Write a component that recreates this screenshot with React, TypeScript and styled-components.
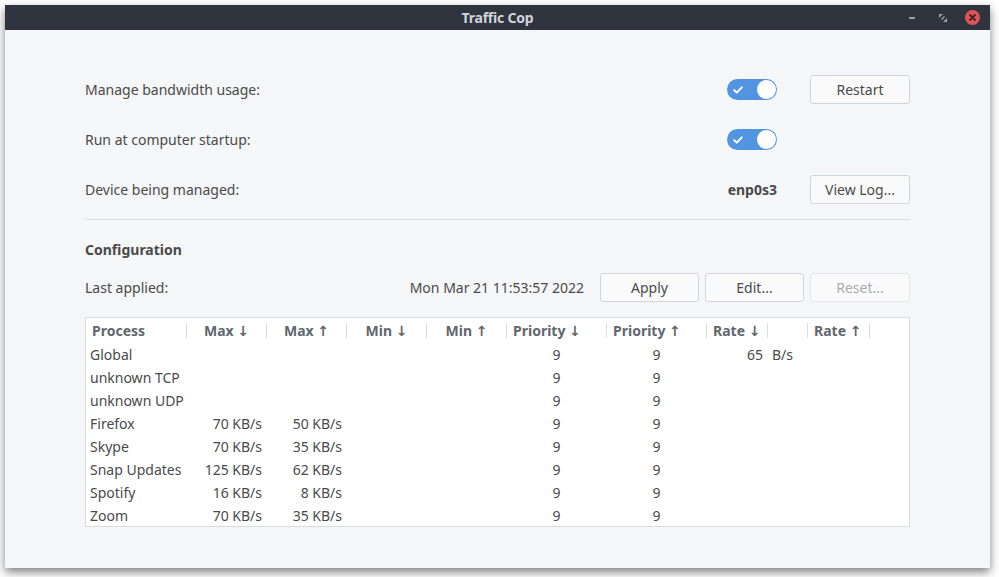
import React from "react";
import styled, { createGlobalStyle } from "styled-components";

const Global = createGlobalStyle`
  html, body { margin: 0; padding: 0; background: #ffffff; }
  body { font-family: "Noto Sans", "DejaVu Sans", sans-serif; }
`;

const Page = styled.div`
  padding: 5px 0 0 5px;
  height: 577px;
  box-sizing: border-box;
  overflow: hidden;
`;

const Window = styled.div`
  width: 985px;
  height: 563px;
  background: #f5f6f7;
  box-shadow: 0 4px 9px rgba(0, 0, 0, 0.5);
  display: flex;
  flex-direction: column;
  color: #4a4a4a;
  font-size: 14px;
`;

const TitleBar = styled.div`
  height: 25px;
  background: #30343e;
  display: grid;
  grid-template-columns: 1fr auto 1fr;
  align-items: center;
`;

const Title = styled.div`
  grid-column: 2;
  color: #cfd4db;
  font-weight: 700;
  font-size: 14px;
  letter-spacing: -0.2px;
`;

const Controls = styled.div`
  grid-column: 3;
  justify-self: end;
  display: flex;
  align-items: center;
  gap: 15px;
  padding-right: 10px;
`;

const CtlSlot = styled.div`
  width: 15px;
  height: 15px;
  display: flex;
  align-items: center;
  justify-content: center;
`;

const Content = styled.div`
  padding: 45px 80px 0 80px;
  display: flex;
  flex-direction: column;
`;

const SettingRow = styled.div`
  display: grid;
  grid-template-columns: 1fr auto 100px;
  column-gap: 33px;
  align-items: center;
  height: 29px;
  margin-bottom: 21px;
`;

const Label = styled.div`
  color: #4a4a4a;
`;

const Button = styled.button<{ $disabled?: boolean }>`
  font-family: inherit;
  font-size: 14px;
  height: 29px;
  width: 100px;
  padding: 0;
  background: #fafafb;
  border: 1px solid ${(p) => (p.$disabled ? "#e2e5ea" : "#cfd6e0")};
  border-radius: 3px;
  color: ${(p) => (p.$disabled ? "#a9abaf" : "#4a4a4a")};
`;

const Toggle = styled.div`
  width: 50px;
  height: 21px;
  border-radius: 11px;
  background: #5294e2;
  display: flex;
  align-items: center;
  justify-content: space-between;
  padding: 0 1px 0 6px;
  box-sizing: border-box;
`;

const Knob = styled.div`
  width: 19px;
  height: 19px;
  border-radius: 50%;
  background: #ffffff;
`;

const Device = styled.div`
  font-weight: 700;
  color: #4a4a4a;
`;

const Separator = styled.div`
  height: 1px;
  background: #d9dbdf;
  margin: -6px 0 20px 0;
`;

const SectionTitle = styled.div`
  font-weight: 700;
  height: 20px;
  line-height: 20px;
  margin-bottom: 13px;
`;

const ApplyRow = styled.div`
  display: flex;
  align-items: center;
  height: 29px;
  margin-bottom: 15px;
`;

const DateText = styled.div`
  margin-left: auto;
  margin-right: 16px;
`;

const ButtonGroup = styled.div`
  display: flex;
  gap: 6px;
  & > button { width: 99px; }
  & > button:last-child { width: 100px; }
`;

const Table = styled.div`
  border: 1px solid #d9dbdf;
  background: #ffffff;
  height: 210px;
  box-sizing: border-box;
`;

const cols = "101px 80px 80px 80px 80px 100px 100px 61px 40px 62px 1fr";

const HeaderRow = styled.div`
  display: grid;
  grid-template-columns: ${cols};
  align-items: center;
  height: 25px;
`;

const HeaderCell = styled.div<{ $align?: string; $last?: boolean }>`
  height: 15px;
  line-height: 15px;
  font-weight: 700;
  color: #62666d;
  text-align: ${(p) => p.$align || "left"};
  padding: 0 6px;
  border-right: ${(p) => (p.$last ? "none" : "1px solid #dcdee2")};
  white-space: nowrap;
  overflow: visible;
`;

const DataRow = styled.div`
  display: grid;
  grid-template-columns: ${cols};
  align-items: center;
  height: 23px;
`;

const Cell = styled.div<{ $align?: string }>`
  text-align: ${(p) => p.$align || "left"};
  padding: 0 5px 0 4px;
  white-space: nowrap;
  color: #4a4a4a;
`;

const Check = () => (
  <svg width="10" height="8" viewBox="0 0 10 8">
    <path d="M1.2 4.2 L3.8 6.6 L8.8 1.4" fill="none" stroke="#ffffff" strokeWidth="2" strokeLinecap="round" strokeLinejoin="round" />
  </svg>
);

const Switch = () => (
  <Toggle>
    <Check />
    <Knob />
  </Toggle>
);

type Row = {
  name: string;
  maxDown?: string;
  maxUp?: string;
  pDown: string;
  pUp: string;
  rate?: string;
  unit?: string;
};

const rows: Row[] = [
  { name: "Global", pDown: "9", pUp: "9", rate: "65", unit: "B/s" },
  { name: "unknown TCP", pDown: "9", pUp: "9" },
  { name: "unknown UDP", pDown: "9", pUp: "9" },
  { name: "Firefox", maxDown: "70 KB/s", maxUp: "50 KB/s", pDown: "9", pUp: "9" },
  { name: "Skype", maxDown: "70 KB/s", maxUp: "35 KB/s", pDown: "9", pUp: "9" },
  { name: "Snap Updates", maxDown: "125 KB/s", maxUp: "62 KB/s", pDown: "9", pUp: "9" },
  { name: "Spotify", maxDown: "16 KB/s", maxUp: "8 KB/s", pDown: "9", pUp: "9" },
  { name: "Zoom", maxDown: "70 KB/s", maxUp: "35 KB/s", pDown: "9", pUp: "9" },
];

export default function App() {
  return (
    <Page>
      <Global />
      <Window>
        <TitleBar>
          <Title>Traffic Cop</Title>
          <Controls>
            <CtlSlot>
              <svg width="8" height="2" viewBox="0 0 8 2">
                <rect x="0" y="0" width="6" height="2" fill="#9aa0aa" />
              </svg>
            </CtlSlot>
            <CtlSlot>
              <svg width="8" height="8" viewBox="0 0 8 8">
                <path d="M0 0 H4 L0 4 Z" fill="#9aa0aa" />
                <path d="M8 8 H4 L8 4 Z" fill="#9aa0aa" />
                <path d="M2.5 5.5 L5.5 2.5" stroke="#9aa0aa" strokeWidth="1.4" />
              </svg>
            </CtlSlot>
            <CtlSlot>
              <svg width="15" height="15" viewBox="0 0 15 15">
                <circle cx="7.5" cy="7.5" r="7.5" fill="#df5459" />
                <path d="M5 5 L10 10 M10 5 L5 10" stroke="#3b2226" strokeWidth="1.8" strokeLinecap="round" />
              </svg>
            </CtlSlot>
          </Controls>
        </TitleBar>
        <Content>
          <SettingRow>
            <Label>Manage bandwidth usage:</Label>
            <Switch />
            <Button>Restart</Button>
          </SettingRow>
          <SettingRow>
            <Label>Run at computer startup:</Label>
            <Switch />
            <div />
          </SettingRow>
          <SettingRow>
            <Label>Device being managed:</Label>
            <Device>enp0s3</Device>
            <Button>View Log...</Button>
          </SettingRow>
          <Separator />
          <SectionTitle>Configuration</SectionTitle>
          <ApplyRow>
            <Label>Last applied:</Label>
            <DateText>Mon Mar 21 11:53:57 2022</DateText>
            <ButtonGroup>
              <Button>Apply</Button>
              <Button>Edit...</Button>
              <Button $disabled>Reset...</Button>
            </ButtonGroup>
          </ApplyRow>
          <Table>
            <HeaderRow>
              <HeaderCell>Process</HeaderCell>
              <HeaderCell $align="center">Max ↓</HeaderCell>
              <HeaderCell $align="center">Max ↑</HeaderCell>
              <HeaderCell $align="center">Min ↓</HeaderCell>
              <HeaderCell $align="center">Min ↑</HeaderCell>
              <HeaderCell>Priority ↓</HeaderCell>
              <HeaderCell>Priority ↑</HeaderCell>
              <HeaderCell>Rate ↓</HeaderCell>
              <HeaderCell />
              <HeaderCell>Rate ↑</HeaderCell>
              <HeaderCell $last />
            </HeaderRow>
            {rows.map((r) => (
              <DataRow key={r.name}>
                <Cell>{r.name}</Cell>
                <Cell $align="right">{r.maxDown}</Cell>
                <Cell $align="right">{r.maxUp}</Cell>
                <Cell />
                <Cell />
                <Cell $align="center">{r.pDown}</Cell>
                <Cell $align="center">{r.pUp}</Cell>
                <Cell $align="right">{r.rate}</Cell>
                <Cell>{r.unit}</Cell>
                <Cell />
                <Cell />
              </DataRow>
            ))}
          </Table>
        </Content>
      </Window>
    </Page>
  );
}
